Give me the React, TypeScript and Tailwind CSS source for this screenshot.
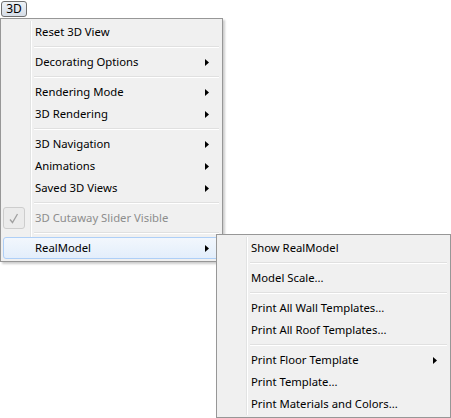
import React from "react";

type Item =
  | { kind: "sep" }
  | { kind: "item"; label: string; sub?: boolean; disabled?: boolean; checked?: boolean; active?: boolean };

const mainItems: Item[] = [
  { kind: "item", label: "Reset 3D View" },
  { kind: "sep" },
  { kind: "item", label: "Decorating Options", sub: true },
  { kind: "sep" },
  { kind: "item", label: "Rendering Mode", sub: true },
  { kind: "item", label: "3D Rendering", sub: true },
  { kind: "sep" },
  { kind: "item", label: "3D Navigation", sub: true },
  { kind: "item", label: "Animations", sub: true },
  { kind: "item", label: "Saved 3D Views", sub: true },
  { kind: "sep" },
  { kind: "item", label: "3D Cutaway Slider Visible", disabled: true, checked: true },
  { kind: "sep" },
  { kind: "item", label: "RealModel", sub: true, active: true },
];

const subItems: Item[] = [
  { kind: "item", label: "Show RealModel" },
  { kind: "sep" },
  { kind: "item", label: "Model Scale..." },
  { kind: "sep" },
  { kind: "item", label: "Print All Wall Templates..." },
  { kind: "item", label: "Print All Roof Templates..." },
  { kind: "sep" },
  { kind: "item", label: "Print Floor Template", sub: true },
  { kind: "item", label: "Print Template..." },
  { kind: "item", label: "Print Materials and Colors..." },
];

const Arrow = () => (
  <svg width="4" height="7" viewBox="0 0 4 7" className="ml-auto mr-[10px]">
    <path d="M0 0 L4 3.5 L0 7 Z" fill="#000" />
  </svg>
);

const MenuList: React.FC<{ items: Item[] }> = ({ items }) => (
  <div className="relative p-[2px] flex flex-col">
    {/* gutter */}
    <div className="absolute left-[29px] top-[2px] bottom-[2px] w-[1px] bg-[#e2e3e3]" />
    <div className="absolute left-[30px] top-[2px] bottom-[2px] w-[1px] bg-white" />
    {items.map((it, i) =>
      it.kind === "sep" ? (
        <div key={i} className="h-[8px] flex flex-col justify-center pl-[31px] pr-[1px]">
          <div className="h-[1px] bg-[#e0e0e0]" />
          <div className="h-[1px] bg-white" />
        </div>
      ) : (
        <div
          key={i}
          className={
            "relative h-[22px] flex items-center " +
            (it.active
              ? "rounded-[3px] border border-[#aecff7] bg-gradient-to-b from-[#f2f7fd] to-[#e3eefb]"
              : "border border-transparent")
          }
        >
          <div className="w-[31px] flex justify-start">
            {it.checked && (
              <div className="w-[22px] h-[22px] -my-[1px] -ml-[1px] rounded-[3px] border border-[#cdcdcd] bg-[#ebebeb] flex items-center justify-center">
                <svg width="10" height="11" viewBox="0 0 10 11">
                  <path d="M1 6.5 L3.5 9.5 L8.5 1" fill="none" stroke="#a0a0a0" strokeWidth="1.3" />
                </svg>
              </div>
            )}
          </div>
          <span className={it.disabled ? "text-[#8d8d8d]" : "text-black"}>{it.label}</span>
          {it.sub && <Arrow />}
        </div>
      )
    )}
  </div>
);

export default function App() {
  return (
    <div
      className="relative w-[451px] h-[418px] bg-white overflow-hidden text-[11.3px] leading-none p-[1px]"
      style={{ fontFamily: '"Segoe UI", "Noto Sans", sans-serif' }}
    >
      <div className="w-[26px] h-[16px] rounded-[3px] border border-[#707070] bg-gradient-to-b from-[#eef2f7] to-[#d6dde7] flex items-center justify-center text-black text-[12px]">
        3D
      </div>
      <div className="absolute left-0 top-[18px] w-[223px] border border-[#979797] bg-[#f0f0f0] shadow-[2px_2px_2px_rgba(0,0,0,0.2)]">
        <MenuList items={mainItems} />
      </div>
      <div className="absolute left-[216px] top-[234px] w-[235px] border border-[#979797] bg-[#f0f0f0] shadow-[2px_2px_2px_rgba(0,0,0,0.2)]">
        <MenuList items={subItems} />
      </div>
    </div>
  );
}
